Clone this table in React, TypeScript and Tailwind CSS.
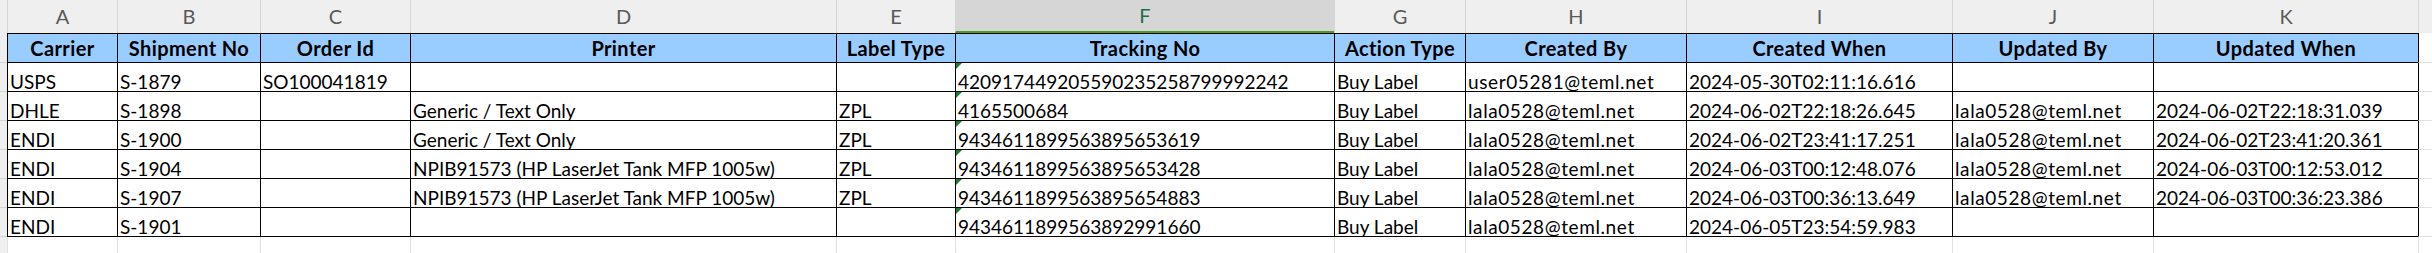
import React from "react";

const cols = ["A", "B", "C", "D", "E", "F", "G", "H", "I", "J", "K"];
const headers = [
  "Carrier",
  "Shipment No",
  "Order Id",
  "Printer",
  "Label Type",
  "Tracking No",
  "Action Type",
  "Created By",
  "Created When",
  "Updated By",
  "Updated When",
];

const rows: string[][] = [
  ["USPS", "S-1879", "SO100041819", "", "", "420917449205590235258799992242", "Buy Label", "user05281@teml.net", "2024-05-30T02:11:16.616", "", ""],
  ["DHLE", "S-1898", "", "Generic / Text Only", "ZPL", "4165500684", "Buy Label", "lala0528@teml.net", "2024-06-02T22:18:26.645", "lala0528@teml.net", "2024-06-02T22:18:31.039"],
  ["ENDI", "S-1900", "", "Generic / Text Only", "ZPL", "9434611899563895653619", "Buy Label", "lala0528@teml.net", "2024-06-02T23:41:17.251", "lala0528@teml.net", "2024-06-02T23:41:20.361"],
  ["ENDI", "S-1904", "", "NPIB91573 (HP LaserJet Tank MFP 1005w)", "ZPL", "9434611899563895653428", "Buy Label", "lala0528@teml.net", "2024-06-03T00:12:48.076", "lala0528@teml.net", "2024-06-03T00:12:53.012"],
  ["ENDI", "S-1907", "", "NPIB91573 (HP LaserJet Tank MFP 1005w)", "ZPL", "9434611899563895654883", "Buy Label", "lala0528@teml.net", "2024-06-03T00:36:13.649", "lala0528@teml.net", "2024-06-03T00:36:23.386"],
  ["ENDI", "S-1901", "", "", "", "9434611899563892991660", "Buy Label", "lala0528@teml.net", "2024-06-05T23:54:59.983", "", ""],
];

function Triangle() {
  return (
    <svg className="absolute left-0 top-0" width="6" height="6" viewBox="0 0 6 6">
      <polygon points="0,0 6,0 0,6" fill="#1e7b34" />
    </svg>
  );
}

export default function App() {
  return (
    <div
      className="h-[253px] w-[2432px] overflow-hidden bg-white text-[19px] text-black"
      style={{ fontFamily: "Lato, 'Open Sans', sans-serif" }}
    >
      <div className="grid h-[253px] grid-cols-[7px_110px_143px_150px_426px_119px_379px_131px_221px_266px_201px_265px_1fr] grid-rows-[33px_30px_29px_29px_29px_29px_29px_29px_1fr]">
        {/* Column letter row */}
        <div className="bg-[#efefef]" />
        {cols.map((c) =>
          c === "F" ? (
            <div
              key={c}
              className="flex items-center justify-center border-l border-l-[#d4d4d4] border-b-2 border-b-[#4a9a2c] bg-[#d6d6d6] text-[20px] leading-[19px] text-[#1e6f47]"
            >
              {c}
            </div>
          ) : (
            <div
              key={c}
              className="flex items-center justify-center border-l border-[#d4d4d4] bg-[#efefef] text-[20px] leading-[19px] text-[#595959]"
            >
              {c}
            </div>
          )
        )}
        <div className="border-l border-[#d4d4d4] bg-[#efefef]" />

        {/* Header row */}
        <div className="border-b border-[#d4d4d4] bg-[#efefef]" />
        {headers.map((h) => (
          <div
            key={h}
            className="flex items-center justify-center overflow-hidden whitespace-nowrap border-l border-t border-b border-black bg-[#99ccff] text-[20px] font-bold leading-[19px] tracking-[0.4px]"
          >
            {h}
          </div>
        ))}
        <div className="border-l border-l-black border-b border-b-[#e1e1e1]" />

        {/* Data rows */}
        {rows.map((r, ri) => (
          <React.Fragment key={ri}>
            <div className="border-b border-[#d4d4d4] bg-[#efefef]" />
            {r.map((v, ci) => (
              <div
                key={ci}
                className="relative flex items-end overflow-visible whitespace-nowrap border-l border-b border-black pl-[2px] leading-[19px]"
              >
                {ci === 5 && <Triangle />}
                <span className={ci === 7 || ci === 9 ? "relative z-10 tracking-[0.6px]" : "relative z-10"}>{v}</span>
              </div>
            ))}
            <div className="border-l border-l-black border-b border-b-[#e1e1e1]" />
          </React.Fragment>
        ))}

        {/* Blank row */}
        <div className="bg-[#efefef]" />
        {cols.map((c) => (
          <div key={c} className="border-l border-[#e1e1e1]" />
        ))}
        <div className="border-l border-[#e1e1e1]" />
      </div>
    </div>
  );
}
